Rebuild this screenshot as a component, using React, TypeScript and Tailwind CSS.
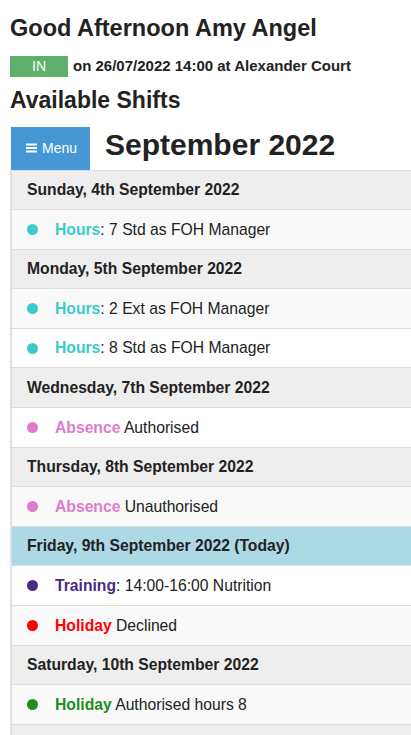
import React from 'react';

type Row =
  | { kind: 'day'; label: string; today?: boolean }
  | { kind: 'item'; tag: string; tagColor: string; sep: string; text: string; bg: string };

const rows: Row[] = [
  { kind: 'day', label: 'Sunday, 4th September 2022' },
  { kind: 'item', tag: 'Hours', tagColor: 'text-[#3ccbcb]', sep: ':', text: ' 7 Std as FOH Manager', bg: 'bg-[#f9f9f9]' },
  { kind: 'day', label: 'Monday, 5th September 2022' },
  { kind: 'item', tag: 'Hours', tagColor: 'text-[#3ccbcb]', sep: ':', text: ' 2 Ext as FOH Manager', bg: 'bg-[#f9f9f9]' },
  { kind: 'item', tag: 'Hours', tagColor: 'text-[#3ccbcb]', sep: ':', text: ' 8 Std as FOH Manager', bg: 'bg-white' },
  { kind: 'day', label: 'Wednesday, 7th September 2022' },
  { kind: 'item', tag: 'Absence', tagColor: 'text-[#de7ccb]', sep: '', text: ' Authorised', bg: 'bg-white' },
  { kind: 'day', label: 'Thursday, 8th September 2022' },
  { kind: 'item', tag: 'Absence', tagColor: 'text-[#de7ccb]', sep: '', text: ' Unauthorised', bg: 'bg-[#f9f9f9]' },
  { kind: 'day', label: 'Friday, 9th September 2022 (Today)', today: true },
  { kind: 'item', tag: 'Training', tagColor: 'text-[#4b2a85]', sep: ':', text: ' 14:00-16:00 Nutrition', bg: 'bg-white' },
  { kind: 'item', tag: 'Holiday', tagColor: 'text-[#ff0000]', sep: '', text: ' Declined', bg: 'bg-[#f9f9f9]' },
  { kind: 'day', label: 'Saturday, 10th September 2022' },
  { kind: 'item', tag: 'Holiday', tagColor: 'text-[#228b22]', sep: '', text: ' Authorised hours 8', bg: 'bg-[#f9f9f9]' },
  { kind: 'day', label: '' },
];

const dotColor: Record<string, string> = {
  'text-[#3ccbcb]': 'bg-[#3ccbcb]',
  'text-[#de7ccb]': 'bg-[#de7ccb]',
  'text-[#4b2a85]': 'bg-[#4b2a85]',
  'text-[#ff0000]': 'bg-[#ff0000]',
  'text-[#228b22]': 'bg-[#228b22]',
};

const App: React.FC = () => {
  return (
    <div className="min-h-screen bg-white pl-[10px] font-['Liberation_Sans',Arial,sans-serif] text-[#222] overflow-hidden">
      <h1 className="pt-[14px] text-[23.5px] leading-[28px] font-bold">Good Afternoon Amy Angel</h1>

      <div className="mt-[13px] flex items-center">
        <span className="flex h-[21px] w-[58px] items-center justify-center bg-[#5fb06a] text-[14px] text-white">IN</span>
        <span className="ml-[5px] text-[15px] font-bold">on 26/07/2022 14:00 at Alexander Court</span>
      </div>

      <h2 className="mt-[8px] text-[23px] leading-[28px] font-bold">Available Shifts</h2>

      <div className="mt-[13px] flex items-start">
        <button className="ml-px flex h-[43px] w-[79px] items-center gap-[5px] bg-[#4598d3] pl-[15px] text-[14px] text-white">
          <svg width="11" height="10" viewBox="0 0 11 10" fill="white">
            <rect x="0" y="0.5" width="11" height="2" />
            <rect x="0" y="4" width="11" height="2" />
            <rect x="0" y="7.5" width="11" height="2" />
          </svg>
          Menu
        </button>
        <h3 className="ml-[15px] text-[30px] leading-[36px] font-bold">September 2022</h3>
      </div>

      <div className="border-l-2 border-[#e0e0e0]">
        {rows.map((r, i) =>
          r.kind === 'day' ? (
            <div
              key={i}
              className={`flex h-[39.6px] items-center border-t border-[#dddddd] pl-[15px] text-[15.7px] font-bold ${
                r.today ? 'bg-[#add8e6]' : 'bg-[#eeeeee]'
              }`}
            >
              {r.label}
            </div>
          ) : (
            <div key={i} className={`flex h-[39.6px] items-center border-t border-[#dddddd] pl-[15px] text-[15.7px] ${r.bg}`}>
              <span className={`h-[11px] w-[11px] rounded-full ${dotColor[r.tagColor]}`} />
              <span className="ml-[17px]">
                <span className={`font-bold ${r.tagColor}`}>{r.tag}</span>
                {r.sep}
                {r.text}
              </span>
            </div>
          )
        )}
      </div>
    </div>
  );
};

export default App;
